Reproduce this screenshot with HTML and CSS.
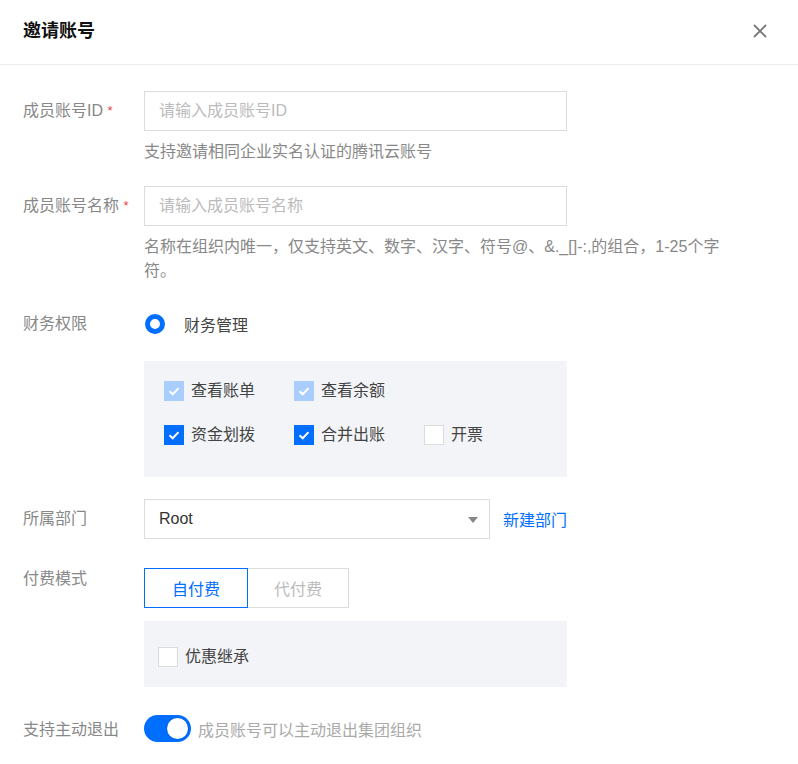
FILE: index.html
```html
<!DOCTYPE html>
<html lang="zh-CN">
<head>
<meta charset="utf-8">
<title>邀请账号</title>
<link rel="stylesheet" href="styles.css">
</head>
<body>
<div class="dialog">
  <div class="header">
    <div class="title">邀请账号</div>
    <button class="close" aria-label="关闭">
      <svg width="16" height="16" viewBox="0 0 16 16"><path d="M2 2L14 14M14 2L2 14" stroke="#777" stroke-width="1.8" fill="none"/></svg>
    </button>
  </div>
  <div class="body">
    <div class="row row-field first">
      <div class="label lbl-input">成员账号ID <span class="req">*</span></div>
      <div class="ctrl">
        <input class="input" type="text" placeholder="请输入成员账号ID">
        <div class="help">支持邀请相同企业实名认证的腾讯云账号</div>
      </div>
    </div>
    <div class="row row-field">
      <div class="label lbl-input">成员账号名称 <span class="req">*</span></div>
      <div class="ctrl">
        <input class="input" type="text" placeholder="请输入成员账号名称">
        <div class="help help-wide">名称在组织内唯一，仅支持英文、数字、汉字、符号@、&amp;._[]-:,的组合，1-25个字符。</div>
      </div>
    </div>
    <div class="row row-finance">
      <div class="label lbl-line">财务权限</div>
      <div class="ctrl">
        <label class="radio"><span class="radio-dot"></span><span class="radio-text">财务管理</span></label>
        <div class="panel panel-perm">
          <div class="check-row">
            <span class="check-item"><span class="cbox disabled"><svg viewBox="0 0 20 20"><path d="M5 10.2L8.6 13.6L15 6.8" stroke="#fff" stroke-width="2.2" fill="none"/></svg></span>查看账单</span>
            <span class="check-item"><span class="cbox disabled"><svg viewBox="0 0 20 20"><path d="M5 10.2L8.6 13.6L15 6.8" stroke="#fff" stroke-width="2.2" fill="none"/></svg></span>查看余额</span>
          </div>
          <div class="check-row">
            <span class="check-item"><span class="cbox checked"><svg viewBox="0 0 20 20"><path d="M5 10.2L8.6 13.6L15 6.8" stroke="#fff" stroke-width="2.2" fill="none"/></svg></span>资金划拨</span>
            <span class="check-item"><span class="cbox checked"><svg viewBox="0 0 20 20"><path d="M5 10.2L8.6 13.6L15 6.8" stroke="#fff" stroke-width="2.2" fill="none"/></svg></span>合并出账</span>
            <span class="check-item"><span class="cbox"></span>开票</span>
          </div>
        </div>
      </div>
    </div>
    <div class="row row-dept">
      <div class="label lbl-input">所属部门</div>
      <div class="ctrl ctrl-inline">
        <div class="select">
          <span class="select-value">Root</span>
          <svg class="caret" width="10" height="6" viewBox="0 0 10 6"><path d="M0 0H10L5 6Z" fill="#888"/></svg>
        </div>
        <a class="link" href="#">新建部门</a>
      </div>
    </div>
    <div class="row row-pay">
      <div class="label lbl-top">付费模式</div>
      <div class="ctrl">
        <div class="tabs">
          <span class="tab active">自付费</span>
          <span class="tab inactive">代付费</span>
        </div>
        <div class="panel panel-inherit">
          <span class="check-item small"><span class="cbox"></span>优惠继承</span>
        </div>
      </div>
    </div>
    <div class="row row-switch">
      <div class="label lbl-switch">支持主动退出</div>
      <div class="ctrl ctrl-inline">
        <span class="switch"><span class="knob"></span></span>
        <span class="switch-text">成员账号可以主动退出集团组织</span>
      </div>
    </div>
  </div>
</div>
</body>
</html>
```

FILE: styles.css
```css
* { box-sizing: border-box; }
html, body {
  margin: 0;
  padding: 0;
  background: #fff;
}
body {
  font-family: "Liberation Sans", "Noto Sans CJK SC", sans-serif;
  font-size: 16px;
  color: #333;
  width: 798px;
  height: 764px;
  overflow: hidden;
}
.dialog { width: 798px; }
.header {
  height: 65px;
  padding: 0 30px 2px 23px;
  border-bottom: 1px solid #ebebeb;
  display: flex;
  align-items: center;
  justify-content: space-between;
}
.title {
  font-size: 18px;
  font-weight: 700;
  color: #111;
  line-height: 24px;
}
.close {
  border: 0;
  background: none;
  padding: 0;
  width: 16px;
  height: 16px;
  display: flex;
}
.body {
  padding: 26px 0 0 23px;
}
.row {
  display: flex;
  align-items: flex-start;
}
.label {
  width: 121px;
  flex: none;
  color: #888;
  line-height: 24px;
}
.lbl-input { padding-top: 8px; }
.lbl-line { padding-top: 0; }
.lbl-top { padding-top: 0; margin-top: -1px; }
.lbl-switch { padding-top: 3px; }
.req {
  color: #e54545;
  font-size: 13px;
  vertical-align: 1px;
}
.ctrl { display: flex; flex-direction: column; }
.ctrl-inline { flex-direction: row; align-items: center; }
.row-field + .row-field { margin-top: 22px; }
.row-finance { margin-top: 29px; }
.row-dept { margin-top: 22px; }
.row-pay { margin-top: 29px; }
.row-switch { margin-top: 28px; }

.input {
  width: 423px;
  height: 40px;
  border: 1px solid #dcdcdc;
  border-radius: 0;
  padding: 0 14px;
  font-family: inherit;
  font-size: 16px;
  color: #333;
  outline: none;
  margin: 0;
}
.input::placeholder { color: #bbb; }
.help {
  margin-top: 9px;
  color: #888;
  line-height: 24px;
  max-width: 582px;
}

.radio {
  display: flex;
  align-items: center;
  height: 24px;
}
.radio-dot {
  width: 20px;
  height: 20px;
  border-radius: 50%;
  border: 5px solid #006eff;
  background: #fff;
  margin-left: 1px;
}
.radio-text {
  margin-left: 19px;
  color: #444;
}
.panel {
  background: #f3f4f7;
  width: 423px;
}
.panel-perm {
  margin-top: 25px;
  height: 116px;
  padding: 18px 0 0 20px;
}
.check-row { display: flex; height: 24px; align-items: center; }
.check-row + .check-row { margin-top: 20px; }
.check-item {
  display: flex;
  align-items: center;
  width: 130px;
  color: #444;
  line-height: 24px;
}
.cbox {
  width: 20px;
  height: 20px;
  flex: none;
  border: 1px solid #dcdcdc;
  background: #fff;
  margin-right: 7px;
  display: flex;
}
.cbox svg { width: 100%; height: 100%; }
.cbox.checked { background: #006eff; border-color: #006eff; }
.cbox.disabled { background: #a9cdfd; border-color: #a9cdfd; }

.select {
  width: 346px;
  height: 40px;
  border: 1px solid #dcdcdc;
  display: flex;
  align-items: center;
  justify-content: space-between;
  padding: 0 11px 0 14px;
}
.select-value { color: #333; }
.caret { margin-top: 1px; }
.link {
  margin-left: 13px;
  color: #006eff;
  text-decoration: none;
}

.tabs { display: flex; }
.tab {
  height: 40px;
  display: flex;
  align-items: center;
  justify-content: center;
  border: 1px solid #dcdcdc;
}
.tab.active {
  width: 104px;
  border-color: #006eff;
  color: #006eff;
}
.tab.inactive {
  width: 101px;
  border-left: 0;
  color: #bbb;
}
.panel-inherit {
  margin-top: 13px;
  height: 66px;
  padding: 0 0 0 14px;
  display: flex;
  align-items: center;
}
.panel-inherit .check-item { margin-top: 6px; }

.switch {
  width: 47px;
  height: 27px;
  border-radius: 14px;
  background: #006eff;
  position: relative;
  flex: none;
}
.knob {
  position: absolute;
  right: 3px;
  top: 3px;
  width: 21px;
  height: 21px;
  border-radius: 50%;
  background: #fff;
  box-shadow: 0 0 2px rgba(0, 40, 120, 0.4);
}
.switch-text {
  margin-left: 7px;
  color: #aaa;
}
```
